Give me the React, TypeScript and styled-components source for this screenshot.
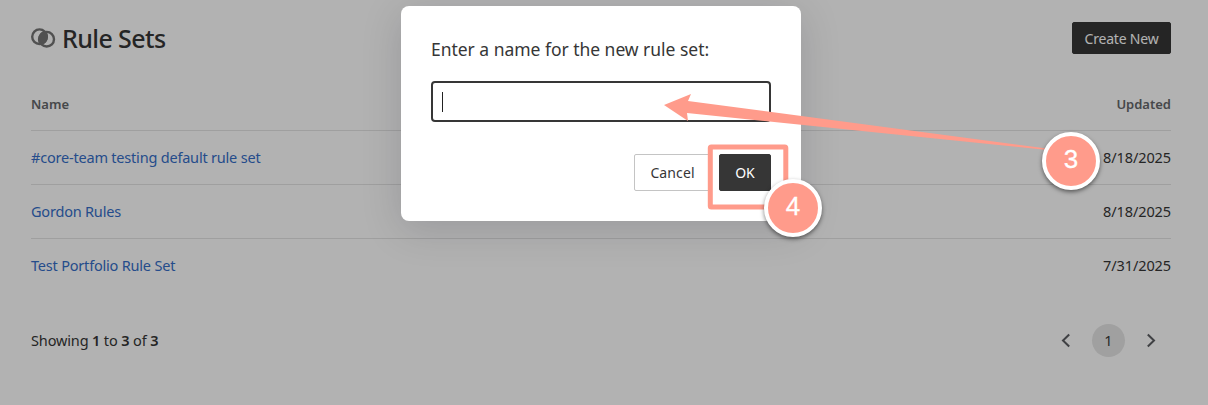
import React from "react";
import styled, { createGlobalStyle } from "styled-components";

const Global = createGlobalStyle`
  *, *::before, *::after { box-sizing: border-box; }
  html, body { margin: 0; height: 100%; overflow: hidden; }
  body {
    background: #fff;
    color: #363636;
    font-family: "Noto Sans", "Open Sans", sans-serif;
    font-size: 14.5px;
  }
  button, input { font: inherit; color: inherit; }
`;

const Page = styled.main`
  position: relative;
  width: 1208px;
  height: 405px;
  padding: 22px 37px 0 31px;
  overflow: hidden;
`;

const Header = styled.header`
  display: flex;
  justify-content: space-between;
  align-items: center;
  height: 32px;
`;

const Heading = styled.div`
  display: flex;
  align-items: center;
  gap: 6px;
`;

const Title = styled.h1`
  margin: 0;
  font-size: 25px;
  line-height: 32px;
  font-weight: 500;
  white-space: nowrap;
`;

const Text = styled.span<{ $track?: number }>`
  letter-spacing: ${(p) => p.$track ?? 0}px;
  white-space: nowrap;
`;

const Button = styled.button<{ $primary?: boolean; $width: number; $height: number }>`
  width: ${(p) => p.$width}px;
  height: ${(p) => p.$height}px;
  padding: 0;
  border: 1px solid ${(p) => (p.$primary ? "#363636" : "#c4c4c4")};
  border-radius: 2px;
  background: ${(p) => (p.$primary ? "#363636" : "#fff")};
  color: ${(p) => (p.$primary ? "#fff" : "#363636")};
  font-size: 14px;
`;

const Table = styled.section`
  margin-top: 24px;
`;

const Row = styled.div<{ $last?: boolean }>`
  display: flex;
  justify-content: space-between;
  align-items: center;
  height: 54px;
  padding-bottom: 2px;
  border-bottom: 1px solid ${(p) => (p.$last ? "transparent" : "#e4e4e4")};
`;

const HeadRow = styled(Row)`
  height: 53px;
  padding-bottom: 0;
  color: #65676b;
  font-size: 13px;
  font-weight: 600;
`;

const Link = styled.a`
  color: #356ec8;
  letter-spacing: -0.2px;
  white-space: nowrap;
`;

const Footer = styled.footer`
  display: flex;
  justify-content: space-between;
  align-items: center;
  height: 34px;
  margin-top: 30px;
`;

const Count = styled.b`
  font-weight: 600;
`;

const Pager = styled.nav`
  display: flex;
  align-items: center;
  gap: 20px;
  margin-right: 14px;
`;

const PageNumber = styled.span`
  display: grid;
  place-items: center;
  width: 33px;
  height: 33px;
  border-radius: 50%;
  background: #e6e6e6;
`;

const Overlay = styled.div`
  position: absolute;
  inset: 0;
  display: flex;
  justify-content: center;
  align-items: flex-start;
  padding: 6px 6px 0 0;
  background: rgba(0, 0, 0, 0.3);
`;

const Dialog = styled.form`
  display: flex;
  flex-direction: column;
  width: 400px;
  height: 215px;
  padding: 30px;
  border-radius: 8px;
  background: #fff;
  box-shadow: 0 8px 40px rgba(10, 10, 25, 0.15);
`;

const Label = styled.label`
  font-size: 17.5px;
  line-height: 27px;
  height: 45px;
`;

const Field = styled.div`
  display: flex;
  align-items: center;
  flex: none;
  height: 41px;
  padding-left: 9px;
  border: 2px solid #363636;
  border-radius: 4px;
`;

const Caret = styled.span`
  width: 1px;
  height: 20px;
  background: #222;
`;

const Actions = styled.div`
  display: flex;
  justify-content: flex-end;
  gap: 8px;
  margin-top: 32px;
`;

const Callouts = styled.svg`
  position: absolute;
  left: 0;
  top: 0;
`;

const Badge = styled.div<{ $x: number; $y: number }>`
  position: absolute;
  left: ${(p) => p.$x}px;
  top: ${(p) => p.$y}px;
  width: 58px;
  height: 58px;
  padding-bottom: 4px;
  display: grid;
  place-items: center;
  border: 4px solid #fff;
  border-radius: 50%;
  background: #ff9b8b;
  color: #fff;
  font-family: "Liberation Sans", Arial, sans-serif;
  font-size: 26px;
  line-height: 30px;
  -webkit-text-stroke: 0.3px #fff;
  box-shadow: 0 2px 4px rgba(0, 0, 0, 0.5);
`;

const rules = [
  { name: "#core-team testing default rule set", updated: "8/18/2025" },
  { name: "Gordon Rules", updated: "8/18/2025" },
  { name: "Test Portfolio Rule Set", updated: "7/31/2025" },
];

const RulesIcon = () => (
  <svg width="25" height="20" viewBox="0 0 25 20" fill="none" stroke="#757575" strokeWidth="2.4">
    <circle cx="8.5" cy="8.7" r="7.3" />
    <circle cx="15.7" cy="11.2" r="7.3" />
    <path d="M9.4 17A8.3 8.3 0 0 1 14.6 2.9A8.3 8.3 0 0 1 9.4 17Z" fill="#757575" stroke="none" />
  </svg>
);

const Chevron = ({ right = false }: { right?: boolean }) => (
  <svg width="12" height="16" viewBox="0 0 12 16" fill="none" stroke="#5c5e62" strokeWidth="2">
    <path d={right ? "M2.8 2.5L9 8.5L2.8 14.5" : "M9.2 2.5L3 8.5L9.2 14.5"} />
  </svg>
);

export default function App() {
  return (
    <>
      <Global />
      <Page>
        <Header>
          <Heading>
            <RulesIcon />
            <Title><Text $track={-0.6}>Rule Sets</Text></Title>
          </Heading>
          <Button $primary $width={99} $height={32}><Text $track={-0.2}>Create New</Text></Button>
        </Header>
        <Table>
          <HeadRow>
            <Text>Name</Text>
            <Text>Updated</Text>
          </HeadRow>
          {rules.map((rule, i) => (
            <Row key={rule.name} $last={i === rules.length - 1}>
              <Link>{rule.name}</Link>
              <Text $track={-0.1}>{rule.updated}</Text>
            </Row>
          ))}
        </Table>
        <Footer>
          <Text $track={-0.14}>
            Showing <Count>1</Count> to <Count>3</Count> of <Count>3</Count>
          </Text>
          <Pager>
            <Chevron />
            <PageNumber>1</PageNumber>
            <Chevron right />
          </Pager>
        </Footer>
        <Overlay>
          <Dialog>
            <Label><Text $track={-0.03}>Enter a name for the new rule set:</Text></Label>
            <Field><Caret /></Field>
            <Actions>
              <Button type="button" $width={77} $height={37}><Text $track={0.1}>Cancel</Text></Button>
              <Button type="button" $primary $width={52} $height={37}><Text>OK</Text></Button>
            </Actions>
          </Dialog>
        </Overlay>
        <Callouts width="1208" height="405" viewBox="0 0 1208 405">
          <path d="M664 105L691 94L688 101L1045 148.3V149.7L687 113L688 121Z" fill="#ff9b8b" />
          <rect x="710.3" y="147" width="75.5" height="60" rx="1" fill="none" stroke="#ff9b8b" strokeWidth="5" />
        </Callouts>
        <Badge $x={1042} $y={132}>3</Badge>
        <Badge $x={764} $y={179}>4</Badge>
      </Page>
    </>
  );
}
